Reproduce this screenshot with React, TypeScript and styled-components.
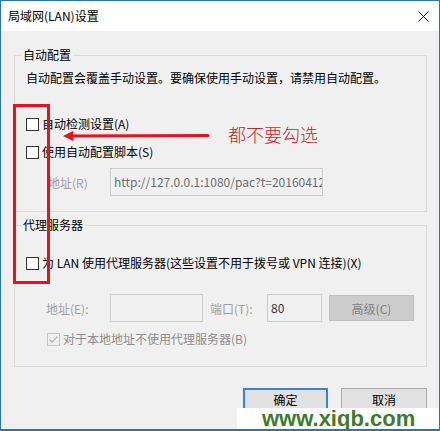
import React from "react";
import styled, { createGlobalStyle } from "styled-components";

const Global = createGlobalStyle`
  html, body { margin: 0; padding: 0; background: #ffffff; }
  body { font-family: "Noto Sans CJK SC", "Noto Sans", sans-serif; font-size: 12px; color: #000; }
  * { box-sizing: border-box; }
`;

const Window = styled.div`
  position: relative;
  width: 440px;
  height: 431px;
  border: 1px solid #2a75b0;
  border-bottom-width: 2px;
  display: flex;
  flex-direction: column;
  background: #f0f0f0;
  overflow: hidden;
`;

const TitleBar = styled.div`
  height: 30px;
  background: #ffffff;
  display: flex;
  align-items: center;
  justify-content: space-between;
  padding: 0 10px 0 7px;
  font-size: 12px;
  line-height: 16px;
`;

const CloseIcon = styled.svg`
  width: 11px;
  height: 11px;
  display: block;
`;

const Body = styled.div`
  flex: 1;
  padding: 16px 12px 0 13px;
  display: flex;
  flex-direction: column;
`;

const Group = styled.fieldset<{ $gapTop?: number }>`
  margin: ${(p) => p.$gapTop ?? 0}px 0 0 0;
  padding: 0;
  border: 1px solid #dcdcdc;
  min-width: 0;
`;

const Legend = styled.legend`
  margin-left: 6px;
  padding: 0 2px;
  line-height: 16px;
  font-size: 12px;
`;

const GroupContent = styled.div<{ $pt: number; $pb: number }>`
  padding: ${(p) => p.$pt}px 12px ${(p) => p.$pb}px 11px;
  display: flex;
  flex-direction: column;
`;

const Desc = styled.div`
  line-height: 16px;
  white-space: nowrap;
`;

const CheckRow = styled.label<{ $mt: number; $indent?: number; $disabled?: boolean }>`
  display: flex;
  align-items: center;
  height: 16px;
  line-height: 16px;
  margin-top: ${(p) => p.$mt}px;
  margin-left: ${(p) => p.$indent ?? 0}px;
  color: ${(p) => (p.$disabled ? "#8d8d8d" : "#000")};
  white-space: nowrap;
`;

const Box = styled.span<{ $disabled?: boolean }>`
  width: 13px;
  height: 13px;
  border: 1px solid ${(p) => (p.$disabled ? "#c4c4c4" : "#333333")};
  background: ${(p) => (p.$disabled ? "#f0f0f0" : "#ffffff")};
  margin-right: 3px;
  display: flex;
  align-items: center;
  justify-content: center;
  flex: none;
`;

const FieldRow = styled.div<{ $mt: number; $indent: number }>`
  display: flex;
  align-items: center;
  margin-top: ${(p) => p.$mt}px;
  margin-left: ${(p) => p.$indent}px;
  height: 28px;
`;

const FieldLabel = styled.span<{ $w: number }>`
  width: ${(p) => p.$w}px;
  flex: none;
  color: #a0a0a0;
  white-space: nowrap;
`;

const TextBox = styled.input<{ $w: number; $dark?: boolean }>`
  width: ${(p) => p.$w}px;
  height: 28px;
  flex: none;
  border: 1px solid #cccccc;
  background: #f0f0f0;
  padding: 0 0 2px 3px;
  font-family: "Noto Sans CJK SC", "Noto Sans", sans-serif;
  font-size: 12px;
  color: ${(p) => (p.$dark ? "#333333" : "#6d6d6d")};
  outline: none;
  margin: 0;
`;

const Spacer = styled.span<{ $w: number }>`
  width: ${(p) => p.$w}px;
  flex: none;
`;

const GrayButton = styled.button`
  width: 85px;
  height: 26px;
  flex: none;
  border: 1px solid #bfbfbf;
  background: #cccccc;
  color: #838383;
  font-family: "Noto Sans CJK SC", "Noto Sans", sans-serif;
  font-size: 12px;
  padding: 0;
  margin: 0;
`;

const Footer = styled.div`
  display: flex;
  justify-content: flex-end;
  gap: 13px;
  margin-top: 21px;
`;

const DialogButton = styled.button<{ $primary?: boolean }>`
  width: ${(p) => (p.$primary ? 85 : 86)}px;
  height: 26px;
  border: ${(p) => (p.$primary ? "2px solid #2f86d6" : "1px solid #adadad")};
  background: #e1e1e1;
  color: #000;
  font-family: "Noto Sans CJK SC", "Noto Sans", sans-serif;
  font-size: 12px;
  line-height: 16px;
  padding: 0 0 2px 0;
  margin: 0;
`;

const RedFrame = styled.div`
  position: absolute;
  left: 12px;
  top: 103px;
  width: 37px;
  height: 180px;
  border: 3px solid #e3141b;
`;

const Arrow = styled.svg`
  position: absolute;
  left: 60px;
  top: 127px;
  width: 150px;
  height: 16px;
`;

const Note = styled.div`
  position: absolute;
  left: 227px;
  top: 121px;
  font-size: 18px;
  line-height: 24px;
  color: #c4262d;
  font-weight: 300;
  white-space: nowrap;
`;

const Watermark = styled.div`
  position: absolute;
  right: -1px;
  bottom: -2px;
  width: 203px;
  height: 23px;
  background: #ffffff;
  padding-left: 25px;
  font-family: "Liberation Sans", Arial, sans-serif;
  font-weight: bold;
  font-size: 22px;
  line-height: 21px;
  color: #3c7b2c;
  white-space: nowrap;
`;

function Check({ checked, disabled }: { checked?: boolean; disabled?: boolean }) {
  return (
    <Box $disabled={disabled}>
      {checked && (
        <svg width="11" height="11" viewBox="0 0 11 11">
          <path d="M1.5 5.5 L4.2 8.2 L9.5 2.3" fill="none" stroke="#b0b0b0" strokeWidth="1.2" />
        </svg>
      )}
    </Box>
  );
}

export default function App() {
  return (
    <>
      <Global />
      <Window>
        <TitleBar>
          <span>局域网(LAN)设置</span>
          <CloseIcon viewBox="0 0 11 11">
            <path d="M0.5 0.5 L10.5 10.5 M10.5 0.5 L0.5 10.5" stroke="#000" strokeWidth="1" />
          </CloseIcon>
        </TitleBar>
        <Body>
          <Group>
            <Legend>自动配置</Legend>
            <GroupContent $pt={7} $pb={15}>
              <Desc>自动配置会覆盖手动设置。要确保使用手动设置，请禁用自动配置。</Desc>
              <CheckRow $mt={30}>
                <Check />
                自动检测设置(A)
              </CheckRow>
              <CheckRow $mt={12}>
                <Check />
                使用自动配置脚本(S)
              </CheckRow>
              <FieldRow $mt={8} $indent={22}>
                <FieldLabel $w={62}>地址(R)</FieldLabel>
                <TextBox $w={213} readOnly value="http://127.0.0.1:1080/pac?t=20160412" />
              </FieldRow>
            </GroupContent>
          </Group>
          <Group $gapTop={5}>
            <Legend>代理服务器</Legend>
            <GroupContent $pt={22} $pb={19}>
              <CheckRow $mt={0}>
                <Check />
                为 LAN 使用代理服务器(这些设置不用于拨号或 VPN 连接)(X)
              </CheckRow>
              <FieldRow $mt={23} $indent={20}>
                <FieldLabel $w={64}>地址(E):</FieldLabel>
                <TextBox $w={93} readOnly value="" />
                <Spacer $w={7} />
                <FieldLabel $w={57}>端口(T):</FieldLabel>
                <TextBox $w={55} $dark readOnly value="80" />
                <Spacer $w={7} />
                <GrayButton>高级(C)</GrayButton>
              </FieldRow>
              <CheckRow $mt={9} $indent={21} $disabled>
                <Check checked disabled />
                对于本地地址不使用代理服务器(B)
              </CheckRow>
            </GroupContent>
          </Group>
          <Footer>
            <DialogButton $primary>确定</DialogButton>
            <DialogButton>取消</DialogButton>
          </Footer>
        </Body>
        <RedFrame />
        <Arrow viewBox="0 0 150 16">
          <path d="M9 8 L147 7.5" stroke="#e3141b" strokeWidth="3.2" strokeLinecap="round" />
          <polygon points="2,8 12,3 12,13" fill="#e3141b" />
        </Arrow>
        <Note>都不要勾选</Note>
        <Watermark>www.xiqb.com</Watermark>
      </Window>
    </>
  );
}
